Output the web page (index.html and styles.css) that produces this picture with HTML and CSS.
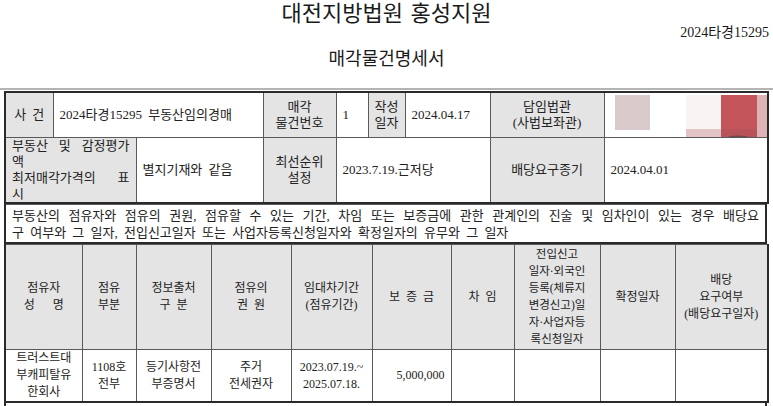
FILE: index.html
```html
<!DOCTYPE html>
<html lang="ko">
<head>
<meta charset="utf-8">
<title>매각물건명세서</title>
<link rel="stylesheet" href="styles.css">
</head>
<body>
<div class="page">
  <header class="doc-head">
    <h1 class="court">대전지방법원 홍성지원</h1>
    <div class="case-no">2024타경15295</div>
    <h2 class="doc-title">매각물건명세서</h2>
  </header>

  <table class="sheet first">
    <colgroup>
      <col class="w48"><col class="w83"><col class="w127"><col class="w73"><col class="w32"><col class="w37"><col class="w85"><col class="w114"><col class="w164">
    </colgroup>
    <tr class="r1">
      <td class="lbl c wide"><span class="ln">사 건</span></td>
      <td colspan="2" class="top case"><span class="ln">2024타경15295 부동산임의경매</span></td>
      <td class="lbl c"><span class="ln">매각</span><span class="ln">물건번호</span></td>
      <td class="pl9"><span class="ln">1</span></td>
      <td class="lbl c tight"><span class="ln">작성</span><span class="ln">일자</span></td>
      <td class="pl8"><span class="ln">2024.04.17</span></td>
      <td class="lbl c"><span class="ln">담임법관</span><span class="ln">(사법보좌관)</span></td>
      <td class="photo">
        <svg class="redact" width="164" height="44" viewBox="0 0 164 44">
          <rect x="4" y="2" width="35" height="35" fill="#d9cbcb"/>
          <rect x="75" y="2" width="35" height="37" fill="#f8f4f4"/>
          <rect x="75" y="36" width="85" height="8" fill="#e3c4c6"/>
          <rect x="110" y="2" width="36" height="42" fill="#c4555b"/>
          <rect x="110" y="36" width="36" height="8" fill="#b9535a"/>
          <rect x="146" y="2" width="14" height="42" fill="#ddb4b6"/>
          <ellipse cx="127" cy="44" rx="10" ry="1.5" fill="#6e4a4c"/>
        </svg>
      </td>
    </tr>
    <tr class="r2">
      <td colspan="2" class="lbl top est">
        <span class="ln jl">부동산 및 감정평가</span>
        <span class="ln">액</span>
        <span class="ln jl">최저매각가격의 표</span>
        <span class="ln">시</span>
      </td>
      <td class="pl8"><span class="ln">별지기재와 같음</span></td>
      <td class="lbl c"><span class="ln">최선순위</span><span class="ln">설정</span></td>
      <td colspan="3" class="pl8"><span class="ln">2023.7.19.근저당</span></td>
      <td class="lbl c"><span class="ln">배당요구종기</span></td>
      <td class="pl8"><span class="ln">2024.04.01</span></td>
    </tr>
  </table>

  <table class="sheet">
    <tr class="r3">
      <td class="note">
        <span class="ln jl">부동산의 점유자와 점유의 권원, 점유할 수 있는 기간, 차임 또는 보증금에 관한 관계인의 진술 및 임차인이 있는 경우 배당요</span>
        <span class="ln">구 여부와 그 일자, 전입신고일자 또는 사업자등록신청일자와 확정일자의 유무와 그 일자</span>
      </td>
    </tr>
  </table>

  <table class="sheet occ">
    <colgroup>
      <col class="o1"><col class="o2"><col class="o3"><col class="o4"><col class="o5"><col class="o6"><col class="o7"><col class="o8"><col class="o9"><col class="o10">
    </colgroup>
    <tr class="hdr">
      <td><span class="ln">점유자</span><span class="ln">성&nbsp;&nbsp;&nbsp;명</span></td>
      <td><span class="ln">점유</span><span class="ln">부분</span></td>
      <td><span class="ln">정보출처</span><span class="ln">구 분</span></td>
      <td><span class="ln">점유의</span><span class="ln">권 원</span></td>
      <td><span class="ln">임대차기간</span><span class="ln">(점유기간)</span></td>
      <td class="wide"><span class="ln">보 증 금</span></td>
      <td class="wide"><span class="ln">차 임</span></td>
      <td class="small">
        <span class="ln">전입신고</span>
        <span class="ln">일자·외국인</span>
        <span class="ln">등록(체류지</span>
        <span class="ln">변경신고)일</span>
        <span class="ln">자·사업자등</span>
        <span class="ln">록신청일자</span>
      </td>
      <td><span class="ln">확정일자</span></td>
      <td><span class="ln">배당</span><span class="ln">요구여부</span><span class="ln">(배당요구일자)</span></td>
    </tr>
    <tr class="data">
      <td><span class="ln">트러스트대</span><span class="ln">부캐피탈유</span><span class="ln">한회사</span></td>
      <td><span class="ln">1108호</span><span class="ln">전부</span></td>
      <td><span class="ln">등기사항전</span><span class="ln">부증명서</span></td>
      <td><span class="ln">주거</span><span class="ln">전세권자</span></td>
      <td><span class="ln">2023.07.19.~</span><span class="ln">2025.07.18.</span></td>
      <td class="num"><span class="ln">5,000,000</span></td>
      <td></td>
      <td></td>
      <td></td>
      <td></td>
    </tr>
  </table>

  <table class="sheet more">
    <tr><td></td></tr>
  </table>
</div>
</body>
</html>
```

FILE: styles.css
```css
html, body {
  margin: 0;
  padding: 0;
  background: #ffffff;
}

body {
  font-family: "Liberation Serif", "Noto Sans CJK KR", serif;
  color: #222222;
  width: 773px;
  overflow: hidden;
}

.page {
  width: 773px;
}

.doc-head {
  padding: 2px 0 18px;
  border-bottom: 2px solid #b4b4b4;
}

.court {
  margin: 0;
  height: 24px;
  font-size: 22px;
  line-height: 24px;
  font-weight: normal;
  text-align: center;
  word-spacing: 2px;
  color: #1a1a1a;
}

.case-no {
  height: 14px;
  font-size: 14px;
  line-height: 14px;
  text-align: right;
  padding-right: 4px;
  color: #1a1a1a;
}

.doc-title {
  margin: 8px 0 0;
  height: 22px;
  font-size: 18px;
  line-height: 22px;
  font-weight: normal;
  text-align: center;
  color: #1a1a1a;
}

.sheet {
  margin-left: 4px;
  width: 763px;
  border-collapse: collapse;
  table-layout: fixed;
  border: 2px solid #2a2a2a;
  border-top: none;
  font-size: 13px;
  line-height: 16px;
}

.sheet.first {
  margin-top: 1px;
  border-top: 2px solid #2a2a2a;
}

.sheet td {
  border: 1px solid #5a5a5a;
  padding: 0 6px;
  vertical-align: middle;
  word-spacing: 3px;
  overflow: hidden;
}

.ln {
  display: block;
  height: 16px;
  white-space: nowrap;
}

.jl {
  text-align: justify;
  text-align-last: justify;
}

.w48 { width: 48px; }
.w83 { width: 83px; }
.w127 { width: 127px; }
.w73 { width: 73px; }
.w32 { width: 32px; }
.w37 { width: 37px; }
.w85 { width: 85px; }
.w114 { width: 114px; }
.w164 { width: 164px; }

.r1 { height: 44.5px; }
.r2 { height: 63.5px; }
.r3 { height: 38.5px; }

.lbl {
  background: #e4e4e4;
}

.c {
  text-align: center;
}

.top {
  vertical-align: top;
}

.wide {
  word-spacing: 6px;
}

.tight {
  padding: 0 2px;
}

.case {
  padding: 3px 8px 0;
  word-spacing: 7px;
}

.pl8 {
  padding-left: 8px;
}

.pl9 {
  padding-left: 9px;
}

.photo {
  padding: 0;
  vertical-align: top;
}

.redact {
  display: block;
}

.est {
  padding: 0 8px;
}

.est .ln {
  height: 16px;
  line-height: 16px;
}

.note {
  padding: 2px 6px 0 6px;
  vertical-align: top;
}

.note .ln {
  height: 17px;
  line-height: 17px;
}

.occ {
  font-size: 12px;
  line-height: 17px;
}

.occ .ln {
  height: 17px;
}

.o1 { width: 77px; }
.o2 { width: 54px; }
.o3 { width: 75px; }
.o4 { width: 80px; }
.o5 { width: 81px; }
.o6 { width: 79px; }
.o7 { width: 63px; }
.o8 { width: 86px; }
.o9 { width: 75px; }
.o10 { width: 93px; }

.occ td {
  text-align: center;
  padding: 0 2px;
}

.hdr {
  height: 105px;
}

.hdr td {
  background: #e4e4e4;
}

.hdr .small {
  font-size: 11.5px;
  word-spacing: 0;
}

.hdr .small .ln {
  height: 17px;
  line-height: 17px;
}

.data {
  height: 51px;
}

.occ .num {
  text-align: right;
  padding-right: 6px;
}

.more td {
  height: 20px;
  border-top: none;
}
```
